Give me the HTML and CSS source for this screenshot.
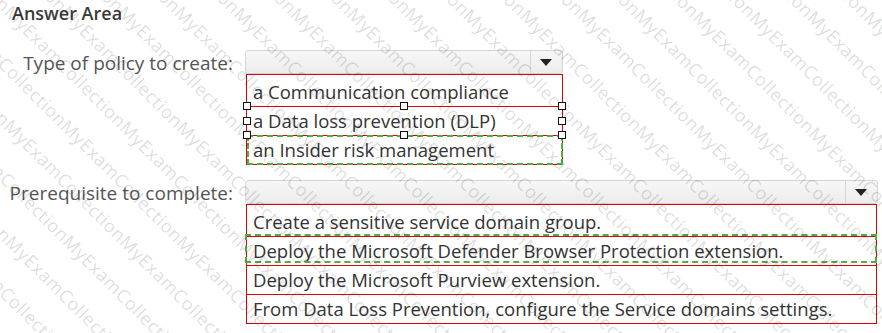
FILE: index.html
```html
<!DOCTYPE html>
<html lang="en">
<head>
    <meta charset="UTF-8">
    <title>Answer Area</title>
    <link rel="stylesheet" href="styles.css">
</head>
<body>
    <div class="page">
        <h3 class="title">Answer Area</h3>

        <div class="question q1">
            <div class="label">Type of policy to create:</div>
            <div class="field">
                <div class="select select-short"><span class="arrow"></span></div>
                <div class="options opts-short">
                    <div class="opt first">a Communication compliance</div>
                    <div class="opt picked">a Data loss prevention (DLP)
                        <span class="h tl"></span><span class="h tm"></span><span class="h tr"></span>
                        <span class="h ml"></span><span class="h mr"></span>
                        <span class="h bl"></span><span class="h bm"></span><span class="h br"></span>
                    </div>
                    <div class="opt answer">an Insider risk management</div>
                </div>
            </div>
        </div>

        <div class="question q2">
            <div class="label">Prerequisite to complete:</div>
            <div class="field">
                <div class="select select-long"><span class="arrow"></span></div>
                <div class="options opts-long">
                    <div class="opt first">Create a sensitive service domain group.</div>
                    <div class="opt answer">Deploy the Microsoft Defender Browser Protection extension.</div>
                    <div class="opt">Deploy the Microsoft Purview extension.</div>
                    <div class="opt">From Data Loss Prevention, configure the Service domains settings.</div>
                </div>
            </div>
        </div>
    </div>

    <div class="watermark">
        <div class="wm-lines">
            <div>MyExamCollectionMyExamCollectionMyExamCollectionMyExamCollectionMyExamCollectionMyExamCollectionMyExamCollectionMyExamCollectionMyExamCollectionMyExamCollectionMyExamCollectionMyExamCollection</div>
            <div>MyExamCollectionMyExamCollectionMyExamCollectionMyExamCollectionMyExamCollectionMyExamCollectionMyExamCollectionMyExamCollectionMyExamCollectionMyExamCollectionMyExamCollectionMyExamCollection</div>
            <div>MyExamCollectionMyExamCollectionMyExamCollectionMyExamCollectionMyExamCollectionMyExamCollectionMyExamCollectionMyExamCollectionMyExamCollectionMyExamCollectionMyExamCollectionMyExamCollection</div>
            <div>MyExamCollectionMyExamCollectionMyExamCollectionMyExamCollectionMyExamCollectionMyExamCollectionMyExamCollectionMyExamCollectionMyExamCollectionMyExamCollectionMyExamCollectionMyExamCollection</div>
            <div>MyExamCollectionMyExamCollectionMyExamCollectionMyExamCollectionMyExamCollectionMyExamCollectionMyExamCollectionMyExamCollectionMyExamCollectionMyExamCollectionMyExamCollectionMyExamCollection</div>
            <div>MyExamCollectionMyExamCollectionMyExamCollectionMyExamCollectionMyExamCollectionMyExamCollectionMyExamCollectionMyExamCollectionMyExamCollectionMyExamCollectionMyExamCollectionMyExamCollection</div>
            <div>MyExamCollectionMyExamCollectionMyExamCollectionMyExamCollectionMyExamCollectionMyExamCollectionMyExamCollectionMyExamCollectionMyExamCollectionMyExamCollectionMyExamCollectionMyExamCollection</div>
            <div>MyExamCollectionMyExamCollectionMyExamCollectionMyExamCollectionMyExamCollectionMyExamCollectionMyExamCollectionMyExamCollectionMyExamCollectionMyExamCollectionMyExamCollectionMyExamCollection</div>
            <div>MyExamCollectionMyExamCollectionMyExamCollectionMyExamCollectionMyExamCollectionMyExamCollectionMyExamCollectionMyExamCollectionMyExamCollectionMyExamCollectionMyExamCollectionMyExamCollection</div>
            <div>MyExamCollectionMyExamCollectionMyExamCollectionMyExamCollectionMyExamCollectionMyExamCollectionMyExamCollectionMyExamCollectionMyExamCollectionMyExamCollectionMyExamCollectionMyExamCollection</div>
            <div>MyExamCollectionMyExamCollectionMyExamCollectionMyExamCollectionMyExamCollectionMyExamCollectionMyExamCollectionMyExamCollectionMyExamCollectionMyExamCollectionMyExamCollectionMyExamCollection</div>
            <div>MyExamCollectionMyExamCollectionMyExamCollectionMyExamCollectionMyExamCollectionMyExamCollectionMyExamCollectionMyExamCollectionMyExamCollectionMyExamCollectionMyExamCollectionMyExamCollection</div>
            <div>MyExamCollectionMyExamCollectionMyExamCollectionMyExamCollectionMyExamCollectionMyExamCollectionMyExamCollectionMyExamCollectionMyExamCollectionMyExamCollectionMyExamCollectionMyExamCollection</div>
            <div>MyExamCollectionMyExamCollectionMyExamCollectionMyExamCollectionMyExamCollectionMyExamCollectionMyExamCollectionMyExamCollectionMyExamCollectionMyExamCollectionMyExamCollectionMyExamCollection</div>
            <div>MyExamCollectionMyExamCollectionMyExamCollectionMyExamCollectionMyExamCollectionMyExamCollectionMyExamCollectionMyExamCollectionMyExamCollectionMyExamCollectionMyExamCollectionMyExamCollection</div>
            <div>MyExamCollectionMyExamCollectionMyExamCollectionMyExamCollectionMyExamCollectionMyExamCollectionMyExamCollectionMyExamCollectionMyExamCollectionMyExamCollectionMyExamCollectionMyExamCollection</div>
            <div>MyExamCollectionMyExamCollectionMyExamCollectionMyExamCollectionMyExamCollectionMyExamCollectionMyExamCollectionMyExamCollectionMyExamCollectionMyExamCollectionMyExamCollectionMyExamCollection</div>
            <div>MyExamCollectionMyExamCollectionMyExamCollectionMyExamCollectionMyExamCollectionMyExamCollectionMyExamCollectionMyExamCollectionMyExamCollectionMyExamCollectionMyExamCollectionMyExamCollection</div>
            <div>MyExamCollectionMyExamCollectionMyExamCollectionMyExamCollectionMyExamCollectionMyExamCollectionMyExamCollectionMyExamCollectionMyExamCollectionMyExamCollectionMyExamCollectionMyExamCollection</div>
            <div>MyExamCollectionMyExamCollectionMyExamCollectionMyExamCollectionMyExamCollectionMyExamCollectionMyExamCollectionMyExamCollectionMyExamCollectionMyExamCollectionMyExamCollectionMyExamCollection</div>
            <div>MyExamCollectionMyExamCollectionMyExamCollectionMyExamCollectionMyExamCollectionMyExamCollectionMyExamCollectionMyExamCollectionMyExamCollectionMyExamCollectionMyExamCollectionMyExamCollection</div>
            <div>MyExamCollectionMyExamCollectionMyExamCollectionMyExamCollectionMyExamCollectionMyExamCollectionMyExamCollectionMyExamCollectionMyExamCollectionMyExamCollectionMyExamCollectionMyExamCollection</div>
        </div>
    </div>
</body>
</html>
```

FILE: styles.css
```css
body {
    margin: 0;
    background-color: #fff;
    font-family: 'Open Sans', 'Noto Sans', sans-serif;
    color: #333;
    width: 882px;
    height: 333px;
    overflow: hidden;
    position: relative;
}
.title {
    margin: 0;
    padding: 0 0 0 12px;
    height: 28px;
    line-height: 26px;
    font-size: 18px;
    font-weight: 600;
    color: #3a3a3a;
}
.question {
    display: grid;
    grid-template-columns: 233px 1fr;
    column-gap: 12px;
}
.q1 {
    margin-top: 22px;
}
.q2 {
    margin-top: 15px;
}
.label {
    text-align: right;
    font-size: 19px;
    color: #555;
    line-height: 23px;
    padding-top: 2px;
}
.field {
    display: flex;
    flex-direction: column;
}
.select {
    height: 22px;
    border: 1px solid #d4d4d4;
    border-radius: 3px;
    background: linear-gradient(#f7f7f7, #ececec);
    display: flex;
    justify-content: flex-end;
}
.select-short {
    width: 316px;
}
.select-long {
    width: 631px;
}
.arrow {
    width: 31px;
    border-left: 1px solid #d4d4d4;
    position: relative;
}
.arrow::after {
    content: '';
    position: absolute;
    left: 9px;
    top: 8px;
    border-left: 6px solid transparent;
    border-right: 6px solid transparent;
    border-top: 7px solid #222;
}
.options {
    margin-left: 1px;
    border: 1px solid #e00000;
    display: flex;
    flex-direction: column;
}
.opts-short {
    width: 315px;
}
.opts-long {
    width: 629px;
}
.opt {
    position: relative;
    height: 28px;
    line-height: 28px;
    border-top: 1px solid #e00000;
    padding-left: 6px;
    font-size: 18.5px;
    color: #333;
    white-space: nowrap;
}
.opt.first {
    border-top: none;
    height: 31px;
    line-height: 33px;
}
.opt.answer::after {
    content: '';
    position: absolute;
    left: 0;
    right: -1px;
    top: -1px;
    bottom: -1px;
    border: 2px dashed #4fae48;
}
.opts-long .opt.answer::after {
    left: -2px;
    top: -3px;
    bottom: 2px;
    right: -1px;
}
.h {
    position: absolute;
    width: 6px;
    height: 6px;
    background: #fff;
    border: 1px solid #111;
    z-index: 2;
}
.tl { left: -4px; top: -5px; }
.tm { left: 153px; top: -5px; }
.tr { right: -4px; top: -5px; }
.ml { left: -4px; top: 10px; }
.mr { right: -4px; top: 10px; }
.bl { left: -4px; bottom: -4px; }
.bm { left: 153px; bottom: -4px; }
.br { right: -4px; bottom: -4px; }

/* diagonal watermark over the whole picture */
.watermark {
    position: absolute;
    left: 0;
    top: 0;
    width: 882px;
    height: 333px;
    overflow: hidden;
    pointer-events: none;
}
.wm-lines {
    position: absolute;
    left: 0;
    top: -882px;
    width: 1950px;
    padding-left: 144px;
    transform: rotate(45deg);
    transform-origin: 0 0;
    font-family: 'Open Sans', sans-serif;
    font-size: 18px;
    letter-spacing: 0.6px;
    line-height: 40.3px;
    color: rgba(0, 0, 0, 0.15);
    white-space: nowrap;
}
.wm-lines div:nth-child(4n+1) { text-indent: 121px; }
.wm-lines div:nth-child(4n+2) { text-indent: 80.6px; }
.wm-lines div:nth-child(4n+3) { text-indent: 40.3px; }
.wm-lines div:nth-child(4n+4) { text-indent: 0; }
```
